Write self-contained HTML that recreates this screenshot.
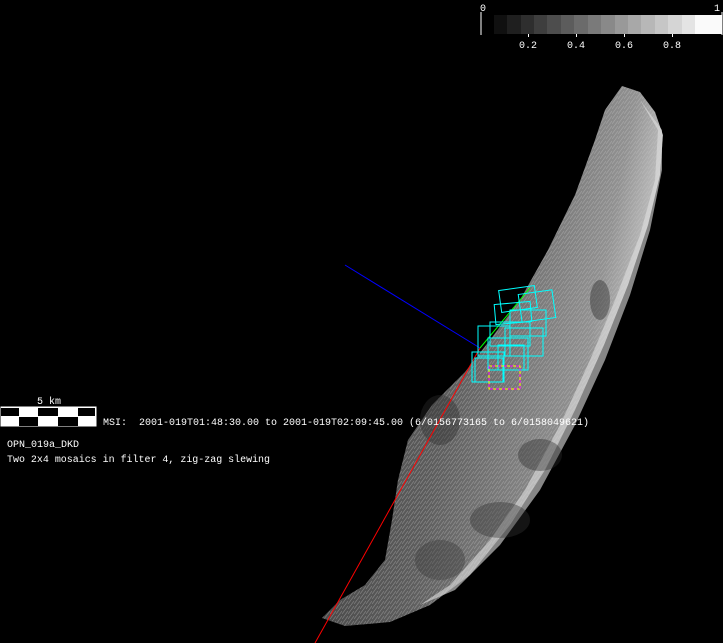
<!DOCTYPE html>
<html><head><style>
html,body{margin:0;padding:0;background:#000;width:723px;height:643px;overflow:hidden}
svg{position:absolute;left:0;top:0}
.t{font-family:"Liberation Mono",monospace;font-size:10px;fill:#fff}
</style></head><body>
<svg width="723" height="643" viewBox="0 0 723 643">
<defs>
<linearGradient id="g" x1="0" y1="0" x2="1" y2="0.3">
<stop offset="0" stop-color="#333"/>
<stop offset="0.5" stop-color="#5e5e5e"/>
<stop offset="0.85" stop-color="#929292"/>
<stop offset="1" stop-color="#d0d0d0"/>
</linearGradient>
<pattern id="p" width="6" height="5" patternUnits="userSpaceOnUse">
<path d="M0 4 L3 0 M3 5 L6 1" stroke="#ccc" stroke-width="0.8" opacity="0.35"/>
</pattern>
</defs>
<path d="M622 86 L640 92 L655 112 L663 135 L660 175 L648 225 L628 285 L604 345 L575 410 L545 470 L510 525 L470 575 L430 605 L390 622 L345 626 L322 618 L340 600 L365 585 L385 560 L392 520 L398 480 L408 440 L432 405 L465 372 L490 340 L520 300 L548 250 L575 195 L595 140 L605 110 Z" fill="url(#g)"/>
<path d="M622 86 L640 92 L655 112 L663 135 L660 175 L648 225 L628 285 L604 345 L575 410 L545 470 L510 525 L470 575 L430 605 L390 622 L345 626 L322 618 L340 600 L365 585 L385 560 L392 520 L398 480 L408 440 L432 405 L465 372 L490 340 L520 300 L548 250 L575 195 L595 140 L605 110 Z" fill="url(#p)"/>
<path d="M640 100 L658 130 L655 180 L640 235 L615 300 L590 360 L560 425 L525 490 L490 540 L450 585 L420 605 L455 590 L500 545 L540 490 L575 425 L605 360 L630 295 L650 230 L662 170 L662 130 Z" fill="#e0e0e0" opacity="0.6"/>
<ellipse cx="500" cy="520" rx="30" ry="18" fill="#333" opacity="0.4"/>
<ellipse cx="540" cy="455" rx="22" ry="16" fill="#2a2a2a" opacity="0.4"/>
<ellipse cx="600" cy="300" rx="10" ry="20" fill="#222" opacity="0.4"/>
<ellipse cx="440" cy="420" rx="20" ry="25" fill="#2d2d2d" opacity="0.4"/>
<ellipse cx="440" cy="560" rx="25" ry="20" fill="#3a3a3a" opacity="0.4"/>
<line x1="345" y1="265" x2="480" y2="348" stroke="#0000ff" stroke-width="1"/>
<line x1="480" y1="348" x2="315" y2="643" stroke="#ff0000" stroke-width="1"/>
<line x1="480" y1="348" x2="530" y2="288" stroke="#00ff00" stroke-width="1"/>
<g fill="none" stroke="#00ffff" stroke-width="1">
<rect x="500" y="288" width="36" height="22" transform="rotate(-8 518 299)"/>
<rect x="520" y="292" width="34" height="28" transform="rotate(-8 537 306)"/>
<rect x="495" y="303" width="36" height="20" transform="rotate(-5 513 313)"/>
<rect x="510" y="310" width="36" height="26"/>
<rect x="478" y="326" width="32" height="30"/>
<rect x="490" y="322" width="40" height="24"/>
<rect x="505" y="328" width="38" height="28"/>
<rect x="488" y="338" width="40" height="32"/>
<rect x="472" y="352" width="32" height="30"/>
<rect x="475" y="358" width="28" height="24"/>
<rect x="498" y="345" width="26" height="25"/>
</g>
<rect x="489" y="366" width="31" height="23" fill="none" stroke="#ffff00" stroke-dasharray="3 3"/>
<rect x="489" y="366" width="31" height="23" fill="none" stroke="#ff00ff" stroke-dasharray="3 3" stroke-dashoffset="3"/>
<line x1="481" y1="12" x2="481" y2="35" stroke="#fff"/>
<text x="480" y="11" class="t">0</text>
<text x="714" y="11" class="t">1</text>
<g>
<rect x="494" y="15" width="14" height="19" fill="#101010"/>
<rect x="507" y="15" width="14" height="19" fill="#1f1f1f"/>
<rect x="521" y="15" width="14" height="19" fill="#2e2e2e"/>
<rect x="534" y="15" width="14" height="19" fill="#3e3e3e"/>
<rect x="547" y="15" width="14" height="19" fill="#4d4d4d"/>
<rect x="561" y="15" width="14" height="19" fill="#5c5c5c"/>
<rect x="574" y="15" width="14" height="19" fill="#6b6b6b"/>
<rect x="588" y="15" width="14" height="19" fill="#7a7a7a"/>
<rect x="601" y="15" width="14" height="19" fill="#898989"/>
<rect x="615" y="15" width="14" height="19" fill="#999"/>
<rect x="628" y="15" width="14" height="19" fill="#a8a8a8"/>
<rect x="641" y="15" width="14" height="19" fill="#b7b7b7"/>
<rect x="655" y="15" width="14" height="19" fill="#c6c6c6"/>
<rect x="668" y="15" width="14" height="19" fill="#d5d5d5"/>
<rect x="682" y="15" width="14" height="19" fill="#e4e4e4"/>
<rect x="695" y="15" width="27" height="19" fill="#fafafa"/>
</g>
<line x1="722" y1="12" x2="722" y2="35" stroke="#fff"/>
<g stroke="#fff"><line x1="528.5" y1="34" x2="528.5" y2="37"/><line x1="576.5" y1="34" x2="576.5" y2="37"/><line x1="624.5" y1="34" x2="624.5" y2="37"/><line x1="672.5" y1="34" x2="672.5" y2="37"/></g>
<text x="528" y="48" class="t" text-anchor="middle">0.2</text>
<text x="576" y="48" class="t" text-anchor="middle">0.4</text>
<text x="624" y="48" class="t" text-anchor="middle">0.6</text>
<text x="672" y="48" class="t" text-anchor="middle">0.8</text>
<text x="37" y="404" class="t">5 km</text>
<rect x="0.5" y="406.5" width="96" height="20" fill="#fff"/>
<g fill="#000">
<rect x="1" y="408" width="18" height="8"/><rect x="38" y="408" width="20" height="8"/><rect x="78" y="408" width="17" height="8"/>
<rect x="19" y="417" width="19" height="9"/><rect x="58" y="417" width="20" height="9"/>
</g>
<text x="103" y="425" class="t" xml:space="preserve" textLength="486" lengthAdjust="spacingAndGlyphs">MSI:  2001-019T01:48:30.00 to 2001-019T02:09:45.00 (6/0156773165 to 6/0158049621)</text>
<text x="7" y="447" class="t">OPN_019a_DKD</text>
<text x="7" y="462" class="t" textLength="263" lengthAdjust="spacingAndGlyphs">Two 2x4 mosaics in filter 4, zig-zag slewing</text>
</svg>
</body></html>
